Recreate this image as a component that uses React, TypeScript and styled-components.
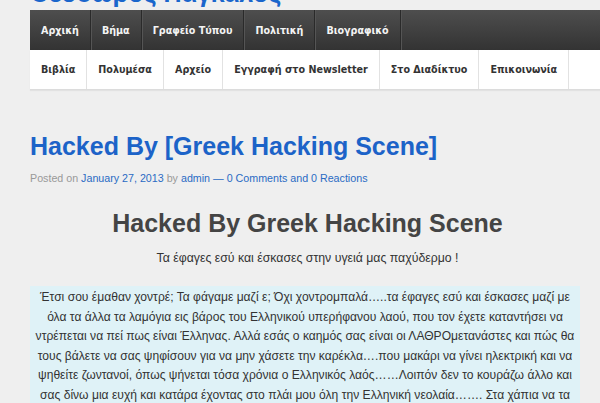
import React from "react";
import styled, { createGlobalStyle } from "styled-components";

const Global = createGlobalStyle`
  html, body { margin: 0; padding: 0; background: #efefef; }
  body { font-family: "Liberation Sans", Arial, sans-serif; overflow: hidden; }
`;

const Page = styled.div`
  width: 600px;
  height: 403px;
  overflow: hidden;
  padding-left: 30px;
  box-sizing: border-box;
`;

const Masthead = styled.div`
  height: 10px;
  overflow: hidden;
  display: flex;
  align-items: flex-end;
`;

const SiteTitle = styled.div`
  font-size: 25px;
  font-weight: bold;
  color: #1a66cc;
  line-height: 26px;
  margin-bottom: 4px;
  white-space: nowrap;
`;

const PrimaryNav = styled.nav`
  display: flex;
  height: 40px;
  width: 600px;
  background: linear-gradient(#4e4e4e, #333333);
`;

const SecondaryNav = styled.nav`
  display: flex;
  height: 39px;
  width: 600px;
  background: #ffffff;
  border-bottom: 1px solid #dcdcdc;
  box-shadow: 0 1px 1px rgba(0, 0, 0, 0.05);
`;

const NavItem = styled.a<{ $dark?: boolean }>`
  display: flex;
  align-items: center;
  padding: 0 11px;
  font-family: "DejaVu Sans", sans-serif;
  font-size: 9.6px;
  font-weight: bold;
  white-space: nowrap;
  color: ${(p) => (p.$dark ? "#f4f4f4" : "#333")};
  border-right: 1px solid ${(p) => (p.$dark ? "#2a2a2a" : "#e2e2e2")};
  box-shadow: ${(p) => (p.$dark ? "1px 0 0 #555" : "none")};
  text-decoration: none;
`;

const Article = styled.article`
  width: 555px;
  padding-top: 40px;
`;

const PostTitle = styled.h1`
  margin: 0;
  font-size: 25px;
  font-weight: bold;
  color: #1c63c8;
  line-height: 32px;
`;

const Meta = styled.div`
  margin-top: 10px;
  font-size: 10.7px;
  color: #999;
`;

const MetaLink = styled.a`
  color: #2a6bc4;
  text-decoration: none;
`;

const Heading = styled.h2`
  margin: 24px 0 0;
  text-align: center;
  font-size: 25px;
  font-weight: bold;
  color: #444;
  line-height: 30px;
`;

const Sub = styled.p`
  margin: 13px 0 0;
  text-align: center;
  font-size: 12.3px;
  color: #333;
`;

const Message = styled.p`
  margin: 21px 0 0;
  width: 550px;
  padding-top: 2px;
  background: #dff2f7;
  text-align: center;
  font-size: 12.1px;
  line-height: 19.5px;
  color: #333;
`;

const lines = [
  "Έτσι σου έμαθαν χοντρέ; Τα φάγαμε μαζί ε; Όχι χοντρομπαλά…..τα έφαγες εσύ και έσκασες μαζί με",
  "όλα τα άλλα τα λαμόγια εις βάρος του Ελληνικού υπερήφανου λαού, που τον έχετε καταντήσει να",
  "ντρέπεται να πεί πως είναι Έλληνας. Αλλά εσάς ο καημός σας είναι οι ΛΑΘΡΟμετανάστες και πώς θα",
  "τους βάλετε να σας ψηφίσουν για να μην χάσετε την καρέκλα….που μακάρι να γίνει ηλεκτρική και να",
  "ψηθείτε ζωντανοί, όπως ψήνεται τόσα χρόνια ο Ελληνικός λαός……Λοιπόν δεν το κουράζω άλλο και",
  "σας δίνω μια ευχή και κατάρα έχοντας στο πλάι μου όλη την Ελληνική νεολαία……. Στα χάπια να τα",
  "πάτε μαζί με τα λαμόγια σας, γιατί ο Έλληνας ξύπνησε",
];

export default function App() {
  return (
    <>
      <Global />
      <Page>
        <Masthead>
          <SiteTitle>Θεόδωρος Πάγκαλος</SiteTitle>
        </Masthead>
        <PrimaryNav>
          {["Αρχική", "Βήμα", "Γραφείο Τύπου", "Πολιτική", "Βιογραφικό"].map((t) => (
            <NavItem $dark key={t}>{t}</NavItem>
          ))}
        </PrimaryNav>
        <SecondaryNav>
          {["Βιβλία", "Πολυμέσα", "Αρχείο", "Εγγραφή στο Newsletter", "Στο Διαδίκτυο", "Επικοινωνία"].map((t) => (
            <NavItem key={t}>{t}</NavItem>
          ))}
        </SecondaryNav>
        <Article>
          <PostTitle>Hacked By [Greek Hacking Scene]</PostTitle>
          <Meta>
            Posted on <MetaLink>January 27, 2013</MetaLink> by <MetaLink>admin</MetaLink>{" "}
            <MetaLink>— 0 Comments and 0 Reactions</MetaLink>
          </Meta>
          <Heading>Hacked By Greek Hacking Scene</Heading>
          <Sub>Τα έφαγες εσύ και έσκασες στην υγειά μας παχύδερμο !</Sub>
          <Message>
            {lines.map((l, i) => (
              <React.Fragment key={i}>
                {l}
                {i < lines.length - 1 && <br />}
              </React.Fragment>
            ))}
          </Message>
        </Article>
      </Page>
    </>
  );
}
